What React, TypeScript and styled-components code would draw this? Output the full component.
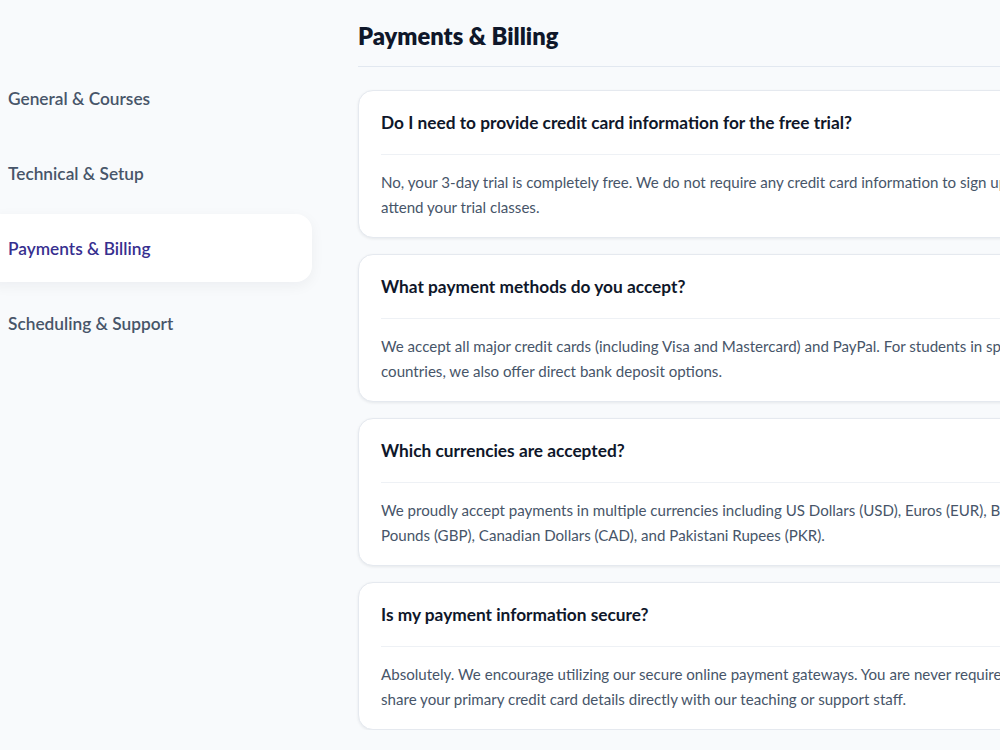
import React from "react"
import styled, { createGlobalStyle } from "styled-components"

const GlobalStyle = createGlobalStyle`
    html, body {
        margin: 0;
        padding: 0;
        background: #f8fafc;
        overflow: hidden;
    }
    body {
        font-family: Lato, "Open Sans", "Liberation Sans", sans-serif;
        color: #0f172a;
    }
    * {
        box-sizing: border-box;
    }
`

const categories = [
    "General & Courses",
    "Technical & Setup",
    "Payments & Billing",
    "Scheduling & Support",
]

const faqs = [
    {
        q: "Do I need to provide credit card information for the free trial?",
        a: "No, your 3-day trial is completely free. We do not require any credit card information to sign up or attend your trial classes.",
    },
    {
        q: "What payment methods do you accept?",
        a: "We accept all major credit cards (including Visa and Mastercard) and PayPal. For students in specific countries, we also offer direct bank deposit options.",
    },
    {
        q: "Which currencies are accepted?",
        a: "We proudly accept payments in multiple currencies including US Dollars (USD), Euros (EUR), British Pounds (GBP), Canadian Dollars (CAD), and Pakistani Rupees (PKR).",
    },
    {
        q: "Is my payment information secure?",
        a: "Absolutely. We encourage utilizing our secure online payment gateways. You are never required to share your primary credit card details directly with our teaching or support staff.",
    },
]

export default function App() {
    const active = "Payments & Billing"
    return (
        <>
            <GlobalStyle />
            <Page>
                <Sidebar>
                    {categories.map(item => (
                        <NavItem key={item} $active={item === active}>{item}</NavItem>
                    ))}
                </Sidebar>
                <Main>
                    <Title>{active}</Title>
                    <List>
                        {faqs.map(item => (
                            <Card key={item.q}>
                                <Question>{item.q}</Question>
                                <Answer>{item.a}</Answer>
                            </Card>
                        ))}
                    </List>
                </Main>
            </Page>
        </>
    )
}

const Page = styled.div`
    display: grid;
    grid-template-columns: 328px 720px;
    column-gap: 46px;
    margin-left: -16px;
    width: 1094px;
`

const Sidebar = styled.nav`
    display: flex;
    flex-direction: column;
    gap: 7px;
    padding-top: 64px;
`

const NavItem = styled.div<{ $active?: boolean }>`
    height: 68px;
    display: flex;
    align-items: center;
    padding-left: 24px;
    border-radius: 16px;
    font-size: 17.3px;
    font-weight: 600;
    color: ${p => (p.$active ? "#372f8f" : "#475569")};
    background: ${p => (p.$active ? "#ffffff" : "transparent")};
    box-shadow: ${p => (p.$active ? "0 4px 14px rgba(15, 23, 42, 0.05)" : "none")};
`

const Main = styled.main`
    display: flex;
    flex-direction: column;
`

const Title = styled.h2`
    margin: 0;
    padding: 21px 0 15px;
    font-size: 23.7px;
    line-height: 30px;
    font-weight: 800;
    color: #0f172a;
    border-bottom: 1px solid #e2e8f0;
`

const List = styled.div`
    display: flex;
    flex-direction: column;
    gap: 16px;
    margin-top: 23px;
`

const Card = styled.div`
    background: #ffffff;
    border: 1px solid #e5e9ef;
    border-radius: 15px;
    padding: 0 22px;
    box-shadow: 0 1px 3px rgba(15, 23, 42, 0.08);
`

const Question = styled.h3`
    margin: 0;
    padding: 20px 0 19px;
    font-size: 17.3px;
    line-height: 24px;
    font-weight: 700;
    color: #0f172a;
    border-bottom: 1px solid #eef1f5;
`

const Answer = styled.p`
    margin: 0;
    padding: 15px 0 17px;
    font-size: 15.1px;
    line-height: 25px;
    color: #475569;
`
